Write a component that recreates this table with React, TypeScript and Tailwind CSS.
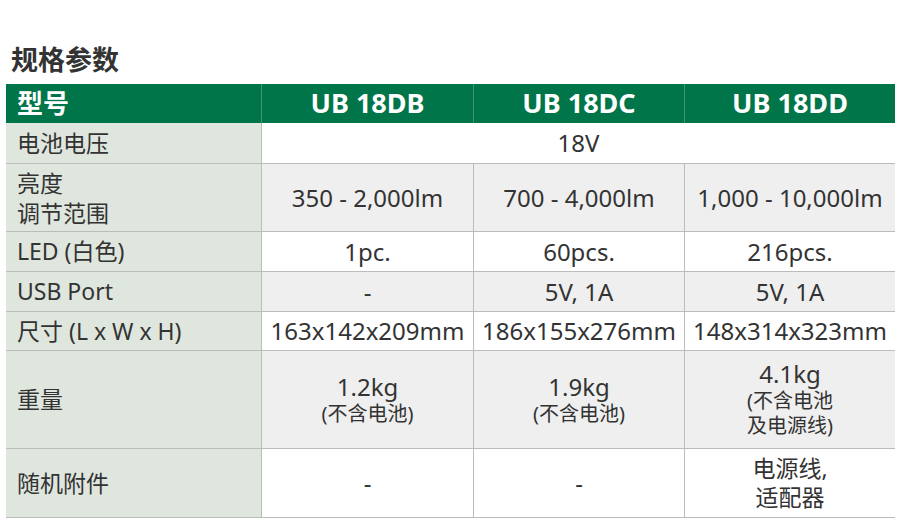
import React from 'react'

type Row = {
  label: React.ReactNode
  cells: React.ReactNode[]
  h: string
  gray?: boolean
  span?: boolean
}

const rows: Row[] = [
  { label: '电池电压', cells: ['18V'], h: 'h-[40px]', span: true },
  {
    label: (
      <span className="leading-[30px]">
        亮度
        <br />
        调节范围
      </span>
    ),
    cells: ['350 - 2,000lm', '700 - 4,000lm', '1,000 - 10,000lm'],
    h: 'h-[68px]',
    gray: true,
  },
  { label: 'LED (白色)', cells: ['1pc.', '60pcs.', '216pcs.'], h: 'h-[40px]' },
  { label: 'USB Port', cells: ['-', '5V, 1A', '5V, 1A'], h: 'h-[40px]', gray: true },
  { label: '尺寸 (L x W x H)', cells: ['163x142x209mm', '186x155x276mm', '148x314x323mm'], h: 'h-[39px]' },
  {
    label: '重量',
    cells: [
      <div className="flex flex-col items-center">
        <span className="text-[24px] leading-[28px]">1.2kg</span>
        <span className="text-[20px] leading-[26px]">(不含电池)</span>
      </div>,
      <div className="flex flex-col items-center">
        <span className="text-[24px] leading-[28px]">1.9kg</span>
        <span className="text-[20px] leading-[26px]">(不含电池)</span>
      </div>,
      <div className="flex flex-col items-center -mt-[2px]">
        <span className="text-[24px] leading-[28px]">4.1kg</span>
        <span className="text-[20px] leading-[25px]">(不含电池</span>
        <span className="text-[20px] leading-[25px]">及电源线)</span>
      </div>,
    ],
    h: 'h-[98px]',
    gray: true,
  },
  {
    label: '随机附件',
    cells: [
      '-',
      '-',
      <span className="leading-[29px] text-center text-[23px]">
        电源线,
        <br />
        适配器
      </span>,
    ],
    h: 'h-[69px]',
  },
]

export default function App() {
  return (
    <div
      className="w-[900px] h-[525px] bg-white text-[#333] overflow-hidden"
      style={{ fontFamily: '"Noto Sans", "Noto Sans CJK SC", sans-serif' }}
    >
      <h1 className="pl-[11px] pt-[43px] h-[84px] text-[27px] font-bold leading-[34px] text-[#333]">规格参数</h1>

      <div className="ml-[6px] w-[889px] grid grid-cols-[255px_212px_211px_211px] border-b border-[#bcbcbc]">
        {/* header */}
        <div className="h-[39px] bg-[#00754a] text-white font-bold text-[26px] flex items-center pl-[11px]">型号</div>
        {['UB 18DB', 'UB 18DC', 'UB 18DD'].map((m) => (
          <div
            key={m}
            className="h-[39px] bg-[#00754a] border-l border-[#3e9672] text-white font-bold text-[27px] flex items-center justify-center"
          >
            {m}
          </div>
        ))}

        {rows.map((r, i) => (
          <React.Fragment key={i}>
            <div
              className={`${r.h} bg-[#dfe6de] flex items-center pl-[11px] text-[23px] ${
                i > 0 ? 'border-t border-[#bcbcbc]' : ''
              }`}
            >
              {r.label}
            </div>
            {r.cells.map((c, j) => (
              <div
                key={j}
                className={`${r.h} ${r.span ? 'col-span-3' : ''} ${r.gray ? 'bg-[#efefef]' : 'bg-white'} ${
                  i > 0 ? 'border-t border-[#bcbcbc]' : ''
                } border-l border-[#bcbcbc] flex items-center justify-center text-[24px]`}
              >
                {c}
              </div>
            ))}
          </React.Fragment>
        ))}
      </div>
    </div>
  )
}
